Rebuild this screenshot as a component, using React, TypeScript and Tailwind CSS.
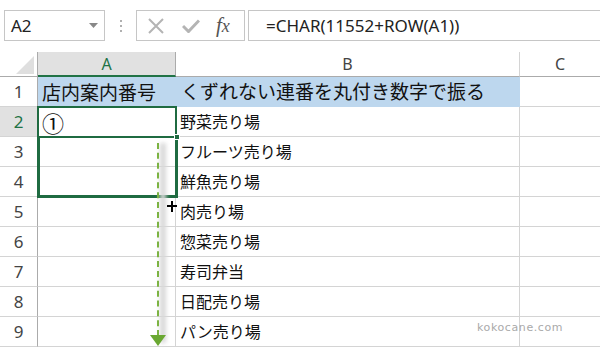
import React from "react";

const rows: [string, string][] = [
  ["店内案内番号", "くずれない連番を丸付き数字で振る"],
  ["①", "野菜売り場"],
  ["", "フルーツ売り場"],
  ["", "鮮魚売り場"],
  ["", "肉売り場"],
  ["", "惣菜売り場"],
  ["", "寿司弁当"],
  ["", "日配売り場"],
  ["", "パン売り場"],
];

const jp = { fontFamily: '"Noto Sans", "Noto Sans CJK JP", sans-serif' };
const cjk = { fontFamily: '"Noto Sans CJK JP", sans-serif' };

export default function App() {
  return (
    <div className="w-[600px] h-[349px] overflow-hidden bg-white relative" style={jp}>
      {/* formula bar */}
      <div className="flex items-center h-[52px] pt-[10px] pb-[11px] pl-[4px]">
        <div className="w-[101px] h-[31px] border border-[#c6c6c6] flex items-center justify-between pl-[6px] pr-[6px]">
          <span className="text-[17px] text-[#222]">A2</span>
          <svg width="9" height="5" viewBox="0 0 9 5">
            <path d="M0 0h9L4.5 5z" fill="#888" />
          </svg>
        </div>
        <div className="w-[31px] flex justify-center">
          <div className="flex flex-col gap-[3px]">
            <span className="w-[2px] h-[2px] bg-[#b0b0b0]" />
            <span className="w-[2px] h-[2px] bg-[#b0b0b0]" />
            <span className="w-[2px] h-[2px] bg-[#b0b0b0]" />
          </div>
        </div>
        <div className="w-[109px] h-[31px] border border-[#c6c6c6] flex items-center pl-[11px] gap-[18px]">
          <svg width="16" height="16" viewBox="0 0 16 16">
            <path d="M1 1L15 15M15 1L1 15" stroke="#b4b4b4" strokeWidth="2" />
          </svg>
          <svg width="18" height="14" viewBox="0 0 18 14">
            <path d="M1 7L6.5 12.5L17 1.5" stroke="#b4b4b4" strokeWidth="3" fill="none" />
          </svg>
          <span
            className="text-[21px] italic text-[#555] leading-none -ml-[2px]"
            style={{ fontFamily: '"Liberation Serif", serif' }}
          >
            f<span className="text-[18px]">x</span>
          </span>
        </div>
        <div className="flex-1 h-[31px] ml-[3px] border border-r-0 border-[#c6c6c6] flex items-center pl-[17px]">
          <span className="text-[17px] text-[#222]">=CHAR(11552+ROW(A1))</span>
        </div>
      </div>

      {/* sheet */}
      <div className="grid grid-cols-[38px_138px_344px_80px] grid-rows-[25px_repeat(9,30px)]">
        {/* header row */}
        <div className="border-r border-b border-[#ababab] bg-white flex items-end justify-end pr-[3px] pb-[2px]">
          <svg width="18" height="18" viewBox="0 0 18 18">
            <path d="M18 0V18H0z" fill="#dfdfdf" />
          </svg>
        </div>
        <div className="bg-[#e1e1e1] border-r border-[#ababab] border-b-2 border-b-[#217346] flex items-center justify-center text-[16px] text-[#217346]">
          A
        </div>
        <div className="border-r border-b border-[#d4d4d4] border-b-[#ababab] flex items-center justify-center text-[16px] text-[#444]">
          B
        </div>
        <div className="border-b border-[#ababab] flex items-center justify-center text-[16px] text-[#444]">
          C
        </div>

        {rows.map(([a, b], i) => {
          const sel = i === 1;
          const head = i === 0;
          return (
            <React.Fragment key={i}>
              <div
                className={`flex items-center justify-center text-[17px] border-b border-[#d4d4d4] border-r border-r-[#ababab] ${
                  sel ? "bg-[#e1e1e1] text-[#217346]" : "bg-white text-[#444]"
                }`}
              >
                {i + 1}
              </div>
              <div
                className={`flex items-center pl-[4px] whitespace-nowrap ${
                  head ? "bg-[#bdd7ee] text-[19px]" : "border-r border-b border-[#d4d4d4] text-[22px] leading-none"
                } text-[#111]`}
                style={cjk}
              >
                {a}
              </div>
              <div
                className={`flex items-center pl-[4px] whitespace-nowrap ${
                  head ? "bg-[#bdd7ee] text-[19px] pl-[5px]" : "border-r border-b border-[#d4d4d4] text-[16px]"
                } text-[#111]`}
              >
                {b}
              </div>
              <div className="border-b border-[#d4d4d4]" />
            </React.Fragment>
          );
        })}
      </div>

      {/* selection of A2 */}
      <div className="absolute left-[37px] top-[106px] w-[140px] h-[32px] border-2 border-[#1f6b41]" />
      {/* fill range A2:A4 */}
      <div className="absolute left-[37px] top-[136px] w-[141px] h-[62px] border-[3px] border-t-0 border-[#1f6b41]" />
      <div className="absolute left-[174px] top-[134px] w-[6px] h-[6px] bg-[#1f6b41] border border-white" />

      {/* drag guide */}
      <div className="absolute left-[160px] top-[143px] w-[6px] h-[200px] bg-[#d8d8d8] blur-[2px]" />
      <div className="absolute left-[157px] top-[143px] h-[193px] border-l-2 border-dashed border-[#7cb342]" />
      <svg className="absolute left-[150px] top-[335px]" width="16" height="11" viewBox="0 0 16 11">
        <path d="M0 0H16L8 11z" fill="#6aa832" />
      </svg>

      {/* cross cursor */}
      <svg className="absolute left-[167px] top-[201px]" width="10" height="11" viewBox="0 0 10 11">
        <path d="M5 0V11M0 5H10" stroke="#000" strokeWidth="2" />
      </svg>

      {/* watermark */}
      <div
        className="absolute left-[477px] top-[320px] text-[11px] tracking-[0.6px] text-[#aaa]"
        style={{ fontFamily: '"DejaVu Sans", sans-serif' }}
      >
        kokocane.com
      </div>
    </div>
  );
}
